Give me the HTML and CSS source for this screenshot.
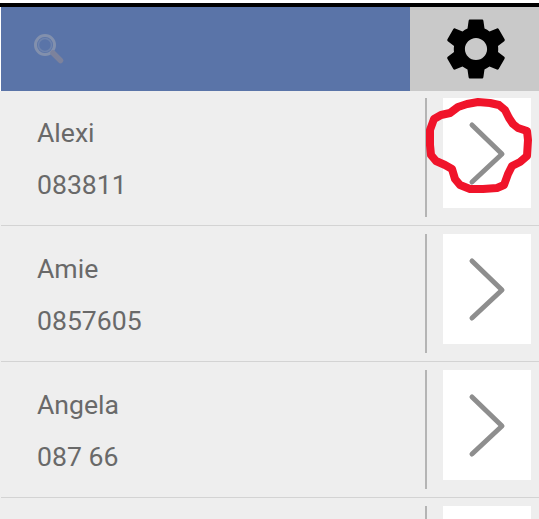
FILE: index.html
```html
<!DOCTYPE html>
<html lang="en">
<head>
<meta charset="utf-8">
<title>Contacts</title>
<link rel="stylesheet" href="styles.css">
</head>
<body>
<div class="status"></div>
<header class="toolbar">
  <div class="search">
    <svg class="search-icon" width="34" height="34" viewBox="0 0 34 34">
      <circle cx="13" cy="13" r="9.5" class="lens"/>
      <circle cx="13" cy="13" r="6.5" class="lens-inner"/>
      <path d="M21 21L28.5 28.5" class="handle"/>
    </svg>
  </div>
  <button class="settings" type="button" aria-label="Settings">
    <svg width="74" height="74" viewBox="0 0 24 24"><path d="M19.14 12.94c.04-.3.06-.61.06-.94 0-.32-.02-.64-.07-.94l2.03-1.58c.18-.14.23-.41.12-.61l-1.92-3.32c-.12-.22-.37-.29-.59-.22l-2.39.96c-.5-.38-1.03-.7-1.62-.94l-.36-2.54c-.04-.24-.24-.41-.48-.41h-3.84c-.24 0-.43.17-.47.41l-.36 2.54c-.59.24-1.13.57-1.62.94l-2.39-.96c-.22-.08-.47 0-.59.22L2.74 8.87c-.12.21-.08.47.12.61l2.03 1.58c-.05.3-.09.63-.09.94s.02.64.07.94l-2.03 1.58c-.18.14-.23.41-.12.61l1.92 3.32c.12.22.37.29.59.22l2.39-.96c.5.38 1.03.7 1.62.94l.36 2.54c.05.24.24.41.48.41h3.84c.24 0 .44-.17.47-.41l.36-2.54c.59-.24 1.13-.56 1.62-.94l2.39.96c.22.08.47 0 .59-.22l1.92-3.32c.12-.22.07-.47-.12-.61l-2.01-1.58zM12 15.6c-1.98 0-3.6-1.62-3.6-3.6s1.62-3.6 3.6-3.6 3.6 1.62 3.6 3.6-1.62 3.6-3.6 3.6z"/></svg>
  </button>
</header>
<main class="list">
  <article class="row">
    <div class="info"><p class="line">Alexi</p><p class="line">083811</p></div>
    <div class="action"><svg width="88" height="110" viewBox="0 0 88 110"><path d="M29 27L59 56L29 84" class="chev"/></svg></div>
  </article>
  <article class="row">
    <div class="info"><p class="line">Amie</p><p class="line">0857605</p></div>
    <div class="action"><svg width="88" height="110" viewBox="0 0 88 110"><path d="M29 27L59 56L29 84" class="chev"/></svg></div>
  </article>
  <article class="row">
    <div class="info"><p class="line">Angela</p><p class="line">087 66</p></div>
    <div class="action"><svg width="88" height="110" viewBox="0 0 88 110"><path d="M29 27L59 56L29 84" class="chev"/></svg></div>
  </article>
  <article class="row">
    <div class="info"></div>
    <div class="action"><svg width="88" height="110" viewBox="0 0 88 110"><path d="M29 27L59 56L29 84" class="chev"/></svg></div>
  </article>
</main>
<svg class="scribble" width="539" height="519" viewBox="0 0 539 519">
  <path d="M430 145L430 130L434 119L441 115L450 113L458 107L467 104L478 102L490 103L499 105L505 110L509 118L513 124L518 128L527 131L528 140L527 156L520 162L512 166L508 174L504 185L497 188L483 189L470 189L460 185L455 179L452 169L445 165L436 161L431 155Z" class="scribble-line"/>
</svg>
</body>
</html>
```

FILE: styles.css
```css
* { box-sizing: border-box; }
html, body { margin: 0; padding: 0; }
body {
  position: relative;
  width: 539px;
  height: 519px;
  overflow: hidden;
  background: #fff;
  font-family: Roboto, "Liberation Sans", sans-serif;
  padding-top: 3px;
}
.status { height: 4px; background: #000; }
.toolbar { display: flex; height: 84px; padding-left: 1px; }
.search {
  flex: 1;
  background: #5a74a8;
  display: flex;
  align-items: flex-start;
  padding: 25px 0 0 31px;
}
.lens { fill: none; stroke: #8290ad; stroke-width: 3; }
.lens-inner { fill: none; stroke: #6f84ad; stroke-width: 1.5; }
.handle { fill: none; stroke: #7c829c; stroke-width: 5.5; stroke-linecap: round; }
.settings {
  width: 129px;
  border: 0;
  padding: 0 0 0 3px;
  background: #c9c9c9;
  display: flex;
  align-items: center;
  justify-content: center;
}
.settings svg { display: block; flex: none; }
.list { height: 428px; overflow: hidden; padding-left: 1px; background: #eee; }
.row {
  display: flex;
  padding: 8px 8px 8px 0;
  border-bottom: 1px solid #d3d3d3;
}
.row:first-child { padding-top: 7px; }
.info {
  flex: 1;
  height: 119px;
  padding: 9px 0 0 36px;
  border-right: 2px solid #b4b4b4;
  margin-right: 16px;
}
.line {
  margin: 0;
  height: 52px;
  line-height: 52px;
  font-size: 26.6px;
  color: #696969;
}
.action { width: 88px; height: 110px; background: #fff; flex: none; }
.action svg { display: block; }
.chev {
  fill: none;
  stroke: #8e8e8e;
  stroke-width: 5;
  stroke-linecap: round;
  stroke-linejoin: round;
}
.scribble { position: absolute; left: 0; top: 0; pointer-events: none; }
.scribble-line {
  fill: none;
  stroke: #f0142a;
  stroke-width: 8;
  stroke-linejoin: round;
}
```
